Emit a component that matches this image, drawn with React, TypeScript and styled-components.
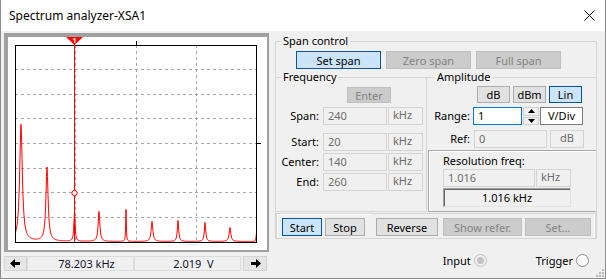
import React from "react";
import styled, { createGlobalStyle, css } from "styled-components";

const FONT = `"Noto Sans", "Open Sans", sans-serif`;

const GlobalStyle = createGlobalStyle`
  html, body {
    margin: 0;
    padding: 0;
    background: #ffffff;
  }
  body {
    font-family: ${FONT};
    font-size: 11px;
    color: #000;
  }
  * {
    box-sizing: border-box;
  }
`;

// spectrum peaks: centre x, height above baseline, half width
const PEAKS: [number, number, number][] = [
  [21, 117, 1.6],
  [47, 74, 1.3],
  [74.5, 30, 0.7],
  [99, 30, 1.0],
  [126, 32, 0.35],
  [152, 20, 1.0],
  [178, 21, 0.8],
  [205, 19, 0.8],
  [230, 14, 1.0],
  [256.5, 9, 0.4]
];

const buildTrace = () => {
  const pts: string[] = [];
  for (let x = 15.5; x <= 256.5; x += 0.5) {
    let s = 0;
    for (const [c, a, w] of PEAKS) {
      s += a / (1 + ((x - c) / w) ** 2);
    }
    pts.push(`${x.toFixed(1)},${(241.5 - s).toFixed(1)}`);
  }
  return "M" + pts.join(" L");
};

const TRACE = buildTrace();
const H_GRID = [69.5, 94.5, 118.5, 143.5, 168.5, 192.5, 217.5];
const V_GRID = [75.5, 136.5, 196.5];

const Window = styled.div`
  width: 606px;
  height: 279px;
  display: flex;
  flex-direction: column;
  background: #f0f0f0;
  border: 1px solid #8c8c8c;
  border-top: none;
  overflow: hidden;
`;

const TitleBar = styled.div`
  height: 31px;
  flex: none;
  display: flex;
  align-items: center;
  justify-content: space-between;
  padding: 0 10px 1px 8px;
  background: #ffffff;
  font-size: 12px;
`;

const Body = styled.div`
  flex: 1;
  display: flex;
  gap: 6px;
  padding: 2px 0 0 3px;
  position: relative;
`;

const LeftCol = styled.div`
  width: 265px;
  display: flex;
  flex-direction: column;
`;

const ChartPanel = styled.div`
  width: 265px;
  height: 219px;
  background: #ffffff;
  border: 2px solid #a0a0a0;
  box-shadow: inset 2px 2px 0 #a0a0a0, inset 1px 1px 0 #e3e3e3;
  padding: 2px 0 0 2px;
`;

const Plot = styled.svg`
  display: block;
`;

const NavBar = styled.div`
  margin-top: 4px;
  height: 15px;
  display: flex;
`;

const NavButton = styled.div<{ $gap?: number }>`
  width: ${p => (p.$gap ? 24 : 23)}px;
  margin-left: ${p => p.$gap ?? 0}px;
  display: flex;
  align-items: center;
  justify-content: center;
  background: #e5e5e5;
  border: 1px solid #d2d2d2;
`;

const NavField = styled.div`
  width: 107px;
  display: flex;
  align-items: center;
  justify-content: center;
  padding-left: 12px;
  border: 1px solid #dcdcdc;
  font-size: 11px;
  color: #101030;
  line-height: 13px;
`;

const RightCol = styled.div`
  width: 322px;
  display: flex;
  flex-direction: column;
`;

const Group = styled.fieldset<{ $left?: boolean; $right?: boolean; $bottom?: boolean }>`
  margin: 0;
  padding: 0;
  min-width: 0;
  border: 0 solid #d5d5d5;
  border-top-width: 1px;
  border-left-width: ${p => (p.$left ? 1 : 0)}px;
  border-right-width: ${p => (p.$right ? 1 : 0)}px;
  border-bottom-width: ${p => (p.$bottom ? 1 : 0)}px;
  display: flex;
  flex-direction: column;
`;

const Legend = styled.legend<{ $offset: number }>`
  margin-left: ${p => p.$offset}px;
  padding: 0 2px;
  line-height: 16px;
  font-size: 11px;
`;

type Variant = "normal" | "active" | "disabled";

const Btn = styled.div<{ $w: number; $h?: number; $v?: Variant }>`
  width: ${p => p.$w}px;
  height: ${p => p.$h ?? 18}px;
  display: flex;
  align-items: center;
  justify-content: center;
  border: 1px solid #adadad;
  background: #e1e1e1;
  font-size: 11px;
  ${p =>
    p.$v === "active" &&
    css`
      background: #cce4f7;
      border-color: #005499;
    `}
  ${p =>
    p.$v === "disabled" &&
    css`
      background: #cccccc;
      border-color: #bfbfbf;
      color: #838383;
    `}
`;

const BtnRow = styled.div<{ $left: number; $top: number; $gap: number }>`
  display: flex;
  gap: ${p => p.$gap}px;
  margin-left: ${p => p.$left}px;
  margin-top: ${p => p.$top}px;
`;

const Split = styled.div`
  display: flex;
`;

const Row = styled.div<{ $top: number }>`
  display: flex;
  align-items: center;
  margin-top: ${p => p.$top}px;
`;

const Label = styled.div<{ $w: number; $gap: number }>`
  width: ${p => p.$w}px;
  margin-right: ${p => p.$gap}px;
  text-align: right;
  line-height: 16px;
`;

type FieldKind = "disabled" | "focus" | "white";

const Field = styled.div<{ $w: number; $h?: number; $k?: FieldKind; $ml?: number }>`
  width: ${p => p.$w}px;
  height: ${p => p.$h ?? 18}px;
  margin-left: ${p => p.$ml ?? 0}px;
  padding: 0 4px;
  line-height: 16px;
  border: 1px solid #d4d4d4;
  background: #f0f0f0;
  color: #6d6d6d;
  white-space: nowrap;
  ${p =>
    p.$k === "focus" &&
    css`
      background: #ffffff;
      border-color: #0078d7;
      color: #000;
    `}
  ${p =>
    p.$k === "white" &&
    css`
      background: #ffffff;
      border-color: #7a7a7a;
      color: #000;
      text-align: center;
    `}
`;

const Unit = styled(Field)`
  line-height: 13px;
`;

const Spinner = styled.div`
  width: 16px;
  height: 18px;
  margin-left: 1px;
  display: flex;
  flex-direction: column;
  gap: 1px;
`;

const SpinHalf = styled.div`
  flex: 1;
  display: flex;
  align-items: center;
  justify-content: center;
  background: #f0f0f0;
  border: 1px solid #d0d0d0;
`;

const Right = styled.div`
  flex: 1;
  display: flex;
  flex-direction: column;
`;

const ResBox = styled.div`
  margin-left: 1px;
  height: 62px;
  border: 1px solid #a8a8a8;
  border-right: none;
  box-shadow: inset 1px 1px 0 #ffffff;
  padding: 2px 0 0 14px;
  display: flex;
  flex-direction: column;
`;

const ResLabel = styled.div`
  line-height: 16px;
  padding-left: 0;
`;

const ResDisplay = styled.div`
  width: 128px;
  height: 19px;
  margin-top: 1px;
  display: flex;
  align-items: center;
  justify-content: center;
  border: 1px solid #a0a0a0;
  border-right-color: #e3e3e3;
  border-bottom-color: #e3e3e3;
  box-shadow: inset 1px 1px 0 #696969;
  color: #000;
`;

const ActionRow = styled.div`
  display: flex;
  margin-top: 1px;
  height: 25px;
`;

const ActionBox = styled.div<{ $w: number; $left?: boolean }>`
  width: ${p => p.$w}px;
  display: flex;
  gap: 3px;
  padding: 4px 0 0 ${p => (p.$left ? 3 : 5)}px;
  border-top: 1px solid #d5d5d5;
  border-left: ${p => (p.$left ? "1px solid #d5d5d5" : "none")};
  border-right: ${p => (p.$left ? "none" : "1px solid #d5d5d5")};
  box-shadow: ${p => (p.$left ? "inset 1px 1px 0 #fff" : "inset -1px 0 0 #fff")};
`;

const RadioRow = styled.div`
  display: flex;
  justify-content: flex-end;
  align-items: center;
  gap: 49px;
  margin-top: 14px;
  padding-right: 8px;
`;

const RadioItem = styled.div`
  display: flex;
  align-items: center;
  gap: 3px;
  font-size: 11px;
`;

const Radio = styled.span<{ $disabled?: boolean }>`
  width: 13px;
  height: 13px;
  border-radius: 50%;
  display: flex;
  align-items: center;
  justify-content: center;
  border: 1px solid ${p => (p.$disabled ? "#c2c2c2" : "#8a8a8a")};
  background: ${p => (p.$disabled ? "#f0f0f0" : "#ffffff")};
  &::after {
    content: "";
    width: 7px;
    height: 7px;
    border-radius: 50%;
    background: ${p => (p.$disabled ? "#c2c2c2" : "transparent")};
  }
`;

const Grip = styled.svg`
  position: absolute;
  right: 1px;
  bottom: 1px;
`;

const ArrowIcon = ({ right }: { right?: boolean }) => (
  <svg width="11" height="9" viewBox="0 0 11 9">
    <g transform={right ? "translate(11 0) scale(-1 1)" : undefined}>
      <polygon points="0,4.5 5,0 5,9" fill="#000" />
      <rect x="4" y="3" width="6" height="3" fill="#000" />
    </g>
  </svg>
);

const Tri = ({ down }: { down?: boolean }) => (
  <svg width="7" height="4" viewBox="0 0 7 4">
    <polygon points={down ? "0,0 7,0 3.5,4" : "0,4 7,4 3.5,0"} fill="#000" />
  </svg>
);

const Spectrum = () => (
  <Plot width="259" height="213" viewBox="8 37 259 213">
    {H_GRID.map(y => (
      <line key={y} x1="15" x2="257" y1={y} y2={y} stroke="#a6a6a6" strokeDasharray="3 3" />
    ))}
    {V_GRID.map(x => (
      <line key={x} x1={x} x2={x} y1="45" y2="242" stroke="#a6a6a6" strokeDasharray="3 3" />
    ))}
    <path d={TRACE} fill="none" stroke="#ff0000" strokeWidth="1" />
    <rect x="15.5" y="45.5" width="241" height="197" fill="none" stroke="#000" />
    <line x1="136.5" x2="136.5" y1="41" y2="45" stroke="#000" />
    <line x1="257" x2="261" y1="143.5" y2="143.5" stroke="#000" />
    <line x1="74.5" x2="74.5" y1="40" y2="242" stroke="#ff0000" />
    <polygon points="66,37 83,37 74.5,45" fill="#ff0000" />
    <text x="74.5" y="42.5" fontSize="7" fontWeight="bold" fill="#fff" textAnchor="middle" fontFamily={FONT}>
      1
    </text>
    <circle cx="74.5" cy="193" r="2.7" fill="#fff" stroke="#ff0000" />
  </Plot>
);

export default function App() {
  return (
    <>
      <GlobalStyle />
      <Window>
        <TitleBar>
          <span>Spectrum analyzer-XSA1</span>
          <svg width="11" height="11" viewBox="0 0 11 11">
            <path d="M0.5 0.5 L10.5 10.5 M10.5 0.5 L0.5 10.5" stroke="#000" strokeWidth="1" />
          </svg>
        </TitleBar>
        <Body>
          <LeftCol>
            <ChartPanel>
              <Spectrum />
            </ChartPanel>
            <NavBar>
              <NavButton>
                <ArrowIcon />
              </NavButton>
              <NavField>78.203 kHz</NavField>
              <NavField>2.019&nbsp;&nbsp;V</NavField>
              <NavButton $gap={2}>
                <ArrowIcon right />
              </NavButton>
            </NavBar>
          </LeftCol>
          <RightCol>
            <Group $left $right $bottom>
              <Legend $offset={5}>Span control</Legend>
              <BtnRow $left={20} $top={2} $gap={5}>
                <Btn $w={85} $v="active">Set span</Btn>
                <Btn $w={85} $v="disabled">Zero span</Btn>
                <Btn $w={85} $v="disabled">Full span</Btn>
              </BtnRow>
              <Split>
                <Group $right $bottom style={{ width: 151 }}>
                  <Legend $offset={5}>Frequency</Legend>
                  <BtnRow $left={71} $top={2} $gap={0}>
                    <Btn $w={44} $h={16} $v="disabled">Enter</Btn>
                  </BtnRow>
                  <Row $top={4}>
                    <Label $w={43} $gap={4}>Span:</Label>
                    <Field $w={64}>240</Field>
                    <Unit $w={35} $ml={1}>kHz</Unit>
                  </Row>
                  <Row $top={8}>
                    <Label $w={43} $gap={4}>Start:</Label>
                    <Field $w={64}>20</Field>
                    <Unit $w={35} $ml={1}>kHz</Unit>
                  </Row>
                  <Row $top={2}>
                    <Label $w={43} $gap={4}>Center:</Label>
                    <Field $w={64}>140</Field>
                    <Unit $w={35} $ml={1}>kHz</Unit>
                  </Row>
                  <Row $top={2}>
                    <Label $w={43} $gap={4}>End:</Label>
                    <Field $w={64}>260</Field>
                    <Unit $w={35} $ml={1}>kHz</Unit>
                  </Row>
                </Group>
                <Right>
                  <Group style={{ height: 81 }}>
                    <Legend $offset={8}>Amplitude</Legend>
                    <BtnRow $left={50} $top={1} $gap={3}>
                      <Btn $w={33} $h={17}>dB</Btn>
                      <Btn $w={33} $h={17}>dBm</Btn>
                      <Btn $w={33} $h={17} $v="active">Lin</Btn>
                    </BtnRow>
                    <Row $top={4}>
                      <Label $w={43} $gap={3}>Range:</Label>
                      <Field $w={49} $k="focus">1</Field>
                      <Spinner>
                        <SpinHalf>
                          <Tri />
                        </SpinHalf>
                        <SpinHalf>
                          <Tri down />
                        </SpinHalf>
                      </Spinner>
                      <Field $w={43} $ml={1} $k="white">V/Div</Field>
                    </Row>
                    <Row $top={5}>
                      <Label $w={43} $gap={4}>Ref:</Label>
                      <Field $w={73}>0</Field>
                      <Unit $w={34} $ml={3} style={{ textAlign: "center" }}>
                        dB
                      </Unit>
                    </Row>
                  </Group>
                  <ResBox>
                    <ResLabel>Resolution freq:</ResLabel>
                    <Row $top={0}>
                      <Field $w={92}>1.016</Field>
                      <Unit $w={35} $ml={1}>kHz</Unit>
                    </Row>
                    <ResDisplay>1.016 kHz</ResDisplay>
                  </ResBox>
                </Right>
              </Split>
              <ActionRow>
                <ActionBox $w={95} $left>
                  <Btn $w={40} $v="active" style={{ marginLeft: 2 }}>Start</Btn>
                  <Btn $w={40}>Stop</Btn>
                </ActionBox>
                <ActionBox $w={225}>
                  <Btn $w={62}>Reverse</Btn>
                  <Btn $w={79} $v="disabled" style={{ marginLeft: 2 }}>Show refer.</Btn>
                  <Btn $w={66} $v="disabled">Set...</Btn>
                </ActionBox>
              </ActionRow>
            </Group>
            <RadioRow>
              <RadioItem>
                Input <Radio $disabled />
              </RadioItem>
              <RadioItem>
                Trigger <Radio />
              </RadioItem>
            </RadioRow>
          </RightCol>
          <Grip width="8" height="8" viewBox="0 0 8 8">
            {[
              [6, 0],
              [6, 3],
              [3, 3],
              [6, 6],
              [3, 6],
              [0, 6]
            ].map(([x, y]) => (
              <rect key={`${x}-${y}`} x={x} y={y} width="2" height="2" fill="#b8b8b8" />
            ))}
          </Grip>
        </Body>
      </Window>
    </>
  );
}
